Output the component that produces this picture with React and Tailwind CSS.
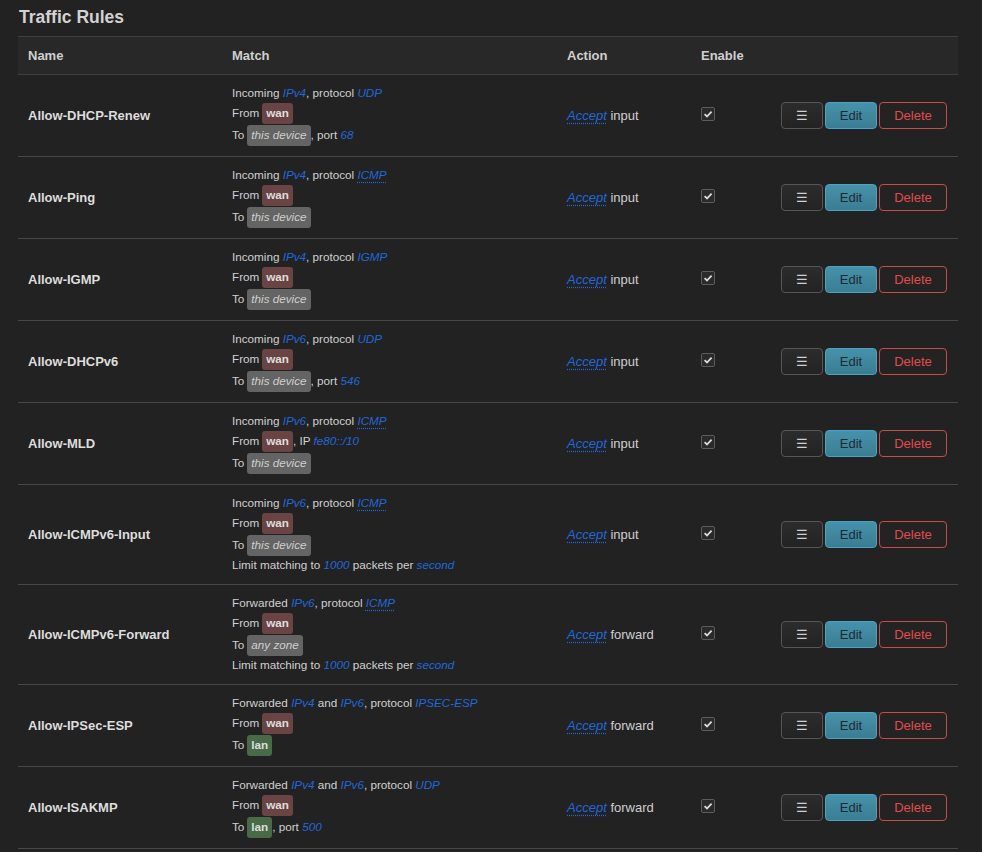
import React from "react";

const L = ({ children, dotted }) => (
  <span
    className={
      "italic text-[#2168dc] whitespace-pre" +
      (dotted ? " underline decoration-dotted decoration-[#2168dc] underline-offset-[3px]" : "")
    }
  >
    {children}
  </span>
);

const T = ({ children }) => <span className="whitespace-pre">{children}</span>;

const Zone = ({ kind }) => {
  if (kind === "wan")
    return (
      <span className="ml-[3px] inline-flex items-center h-[21px] px-[4px] rounded-[3px] bg-[#6a4444] text-[#ddd] font-bold">
        wan
      </span>
    );
  if (kind === "lan")
    return (
      <span className="ml-[3px] inline-flex items-center h-[21px] px-[4px] rounded-[3px] bg-[#476a47] text-[#ddd] font-bold">
        lan
      </span>
    );
  return (
    <span className="ml-[3px] inline-flex items-center h-[21px] px-[4px] rounded-[3px] bg-[#646464] text-[#cfcfcf] italic">
      {kind}
    </span>
  );
};

const TextLine = ({ children }) => <div className="flex items-center h-[18px]">{children}</div>;
const BadgeLine = ({ children }) => <div className="flex items-center h-[22px]">{children}</div>;

const limit = (
  <TextLine>
    <T>Limit matching to </T>
    <L>1000</L>
    <T> packets per </T>
    <L>second</L>
  </TextLine>
);

const rows = [
  {
    name: "Allow-DHCP-Renew",
    action: "input",
    match: (
      <>
        <TextLine>
          <T>Incoming </T><L>IPv4</L><T>, protocol </T><L>UDP</L>
        </TextLine>
        <BadgeLine><T>From</T><Zone kind="wan" /></BadgeLine>
        <BadgeLine><T>To</T><Zone kind="this device" /><T>, port </T><L>68</L></BadgeLine>
      </>
    ),
  },
  {
    name: "Allow-Ping",
    action: "input",
    match: (
      <>
        <TextLine>
          <T>Incoming </T><L>IPv4</L><T>, protocol </T><L dotted>ICMP</L>
        </TextLine>
        <BadgeLine><T>From</T><Zone kind="wan" /></BadgeLine>
        <BadgeLine><T>To</T><Zone kind="this device" /></BadgeLine>
      </>
    ),
  },
  {
    name: "Allow-IGMP",
    action: "input",
    match: (
      <>
        <TextLine>
          <T>Incoming </T><L>IPv4</L><T>, protocol </T><L>IGMP</L>
        </TextLine>
        <BadgeLine><T>From</T><Zone kind="wan" /></BadgeLine>
        <BadgeLine><T>To</T><Zone kind="this device" /></BadgeLine>
      </>
    ),
  },
  {
    name: "Allow-DHCPv6",
    action: "input",
    match: (
      <>
        <TextLine>
          <T>Incoming </T><L>IPv6</L><T>, protocol </T><L>UDP</L>
        </TextLine>
        <BadgeLine><T>From</T><Zone kind="wan" /></BadgeLine>
        <BadgeLine><T>To</T><Zone kind="this device" /><T>, port </T><L>546</L></BadgeLine>
      </>
    ),
  },
  {
    name: "Allow-MLD",
    action: "input",
    match: (
      <>
        <TextLine>
          <T>Incoming </T><L>IPv6</L><T>, protocol </T><L dotted>ICMP</L>
        </TextLine>
        <BadgeLine><T>From</T><Zone kind="wan" /><T>, IP </T><L>fe80::/10</L></BadgeLine>
        <BadgeLine><T>To</T><Zone kind="this device" /></BadgeLine>
      </>
    ),
  },
  {
    name: "Allow-ICMPv6-Input",
    action: "input",
    match: (
      <>
        <TextLine>
          <T>Incoming </T><L>IPv6</L><T>, protocol </T><L dotted>ICMP</L>
        </TextLine>
        <BadgeLine><T>From</T><Zone kind="wan" /></BadgeLine>
        <BadgeLine><T>To</T><Zone kind="this device" /></BadgeLine>
        {limit}
      </>
    ),
  },
  {
    name: "Allow-ICMPv6-Forward",
    action: "forward",
    match: (
      <>
        <TextLine>
          <T>Forwarded </T><L>IPv6</L><T>, protocol </T><L dotted>ICMP</L>
        </TextLine>
        <BadgeLine><T>From</T><Zone kind="wan" /></BadgeLine>
        <BadgeLine><T>To</T><Zone kind="any zone" /></BadgeLine>
        {limit}
      </>
    ),
  },
  {
    name: "Allow-IPSec-ESP",
    action: "forward",
    match: (
      <>
        <TextLine>
          <T>Forwarded </T><L>IPv4</L><T> and </T><L>IPv6</L><T>, protocol </T><L>IPSEC-ESP</L>
        </TextLine>
        <BadgeLine><T>From</T><Zone kind="wan" /></BadgeLine>
        <BadgeLine><T>To</T><Zone kind="lan" /></BadgeLine>
      </>
    ),
  },
  {
    name: "Allow-ISAKMP",
    action: "forward",
    match: (
      <>
        <TextLine>
          <T>Forwarded </T><L>IPv4</L><T> and </T><L>IPv6</L><T>, protocol </T><L>UDP</L>
        </TextLine>
        <BadgeLine><T>From</T><Zone kind="wan" /></BadgeLine>
        <BadgeLine><T>To</T><Zone kind="lan" /><T>, port </T><L>500</L></BadgeLine>
      </>
    ),
  },
];

const Check = () => (
  <div className="w-[14px] h-[14px] mb-[4px] border border-[#5c5c5c] rounded-[2px] bg-[#2a2a2a] flex items-center justify-center">
    <svg width="10" height="10" viewBox="0 0 10 10">
      <path d="M1.6 5.2 L4 7.5 L8.6 2.6" fill="none" stroke="#dcdcdc" strokeWidth="1.8" />
    </svg>
  </div>
);

const grid = "grid grid-cols-[204px_335px_134px_90px_1fr]";

export default function App() {
  return (
    <div
      className="min-h-[852px] bg-[#222222] text-[#cccccc] overflow-hidden"
      style={{ fontFamily: '"Liberation Sans", Arial, sans-serif' }}
    >
      <div className="pl-[19px] pt-[5px] text-[17.5px] leading-[24px] font-bold text-[#d2d2d2]">Traffic Rules</div>
      <div className="ml-[18px] mt-[7px] w-[940px]">
        <div className={grid + " h-[39px] items-center bg-[#282828] border-y border-[#3e3e3e] text-[13px] font-bold text-[#cfcfcf]"}>
          <div className="pl-[10px]">Name</div>
          <div className="pl-[10px]">Match</div>
          <div className="pl-[10px]">Action</div>
          <div className="pl-[10px]">Enable</div>
          <div></div>
        </div>
        {rows.map((r) => (
          <div key={r.name} className={grid + " items-center border-b border-[#474747]"}>
            <div className="pl-[10px] text-[13px] font-bold text-[#dddddd]">{r.name}</div>
            <div className="pl-[10px] pt-[9px] pb-[10px] text-[11.7px] text-[#d0d0d0]">{r.match}</div>
            <div className="pl-[10px] text-[13px] flex">
              <L dotted>Accept</L>
              <span className="whitespace-pre text-[#cfcfcf]"> {r.action}</span>
            </div>
            <div className="pl-[10px] flex">
              <Check />
            </div>
            <div className="flex justify-end pr-[11px] gap-[2px] text-[13px]">
              <button className="w-[42px] h-[27px] rounded-[4px] border border-[#565656] bg-gradient-to-b from-[#2c2c2c] to-[#232323] text-[#cfcfcf] flex items-center justify-center">
                ☰
              </button>
              <button className="w-[52px] h-[27px] rounded-[4px] border border-[#4ba2c2] bg-gradient-to-b from-[#4692ab] to-[#3a7d93] text-[#1d2a30] flex items-center justify-center">
                Edit
              </button>
              <button className="w-[68px] h-[27px] rounded-[4px] border border-[#cc4a4a] bg-[#232323] text-[#e04c4c] flex items-center justify-center">
                Delete
              </button>
            </div>
          </div>
        ))}
      </div>
    </div>
  );
}
